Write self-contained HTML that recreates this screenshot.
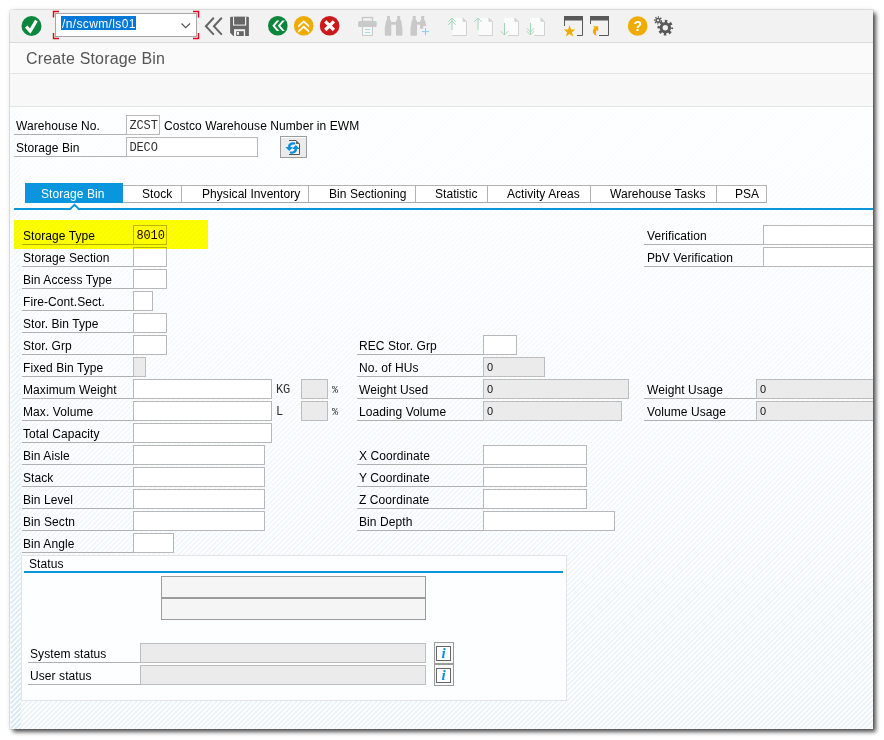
<!DOCTYPE html>
<html lang="en">
<head>
<meta charset="utf-8">
<title>Create Storage Bin</title>
<style>
html,body{margin:0;padding:0;background:#fff;}
body{width:884px;height:740px;position:relative;overflow:hidden;font-family:"Liberation Sans",sans-serif;font-size:12px;color:#000;}
#win{position:absolute;left:10px;top:10px;width:863px;height:719px;overflow:hidden;background:#fff;box-shadow:3px 3px 4px rgba(0,0,0,.66),0 0 0 1px rgba(0,0,0,.07),0 0 5px rgba(0,0,0,.1);border-radius:3px 0 0 0;}
#pg{position:absolute;left:-10px;top:-10px;width:884px;height:740px;}
#pg div{position:absolute;box-sizing:content-box;}
#tb{left:10px;top:10px;width:864px;height:32px;background:#f2f2f2;border-bottom:1px solid #dadada;}
#tt{left:10px;top:43px;width:864px;height:30px;background:#fafafa;border-bottom:1px solid #e2e2e2;}
#tt span{position:absolute;left:16px;top:7px;font-size:16px;color:#555;letter-spacing:.17px;white-space:nowrap;}
#ab{left:10px;top:74px;width:864px;height:32px;background:#f8f8f8;border-bottom:1px solid #e4e4e4;}
#ct{left:10px;top:107px;width:864px;height:623px;background:linear-gradient(to bottom,rgba(255,255,255,.864) 0,rgba(255,255,255,0) 100%),repeating-linear-gradient(135deg,#edf5fa 0,#edf5fa 2.12px,#fff 2.12px,#fff 3.5355px);}
#hd{display:none;}
#ls{left:11px;top:107px;width:10px;height:623px;background:linear-gradient(to bottom,rgba(255,255,255,.864) 0,rgba(255,255,255,0) 100%),repeating-linear-gradient(135deg,#d9ebf6 0,#d9ebf6 2.12px,#fff 2.12px,#fff 3.5355px);}
.lb{height:19px;border-bottom:1px solid #b0b0b0;white-space:nowrap;line-height:19px;letter-spacing:.08px;}
.lb span{position:relative;top:2px;}
.in,.ro{border:1px solid #b8b8b8;background:#fff;font-family:"Liberation Mono",monospace;font-size:12px;letter-spacing:-.15px;color:#303030;line-height:21px;text-indent:2.5px;white-space:nowrap;overflow:hidden;}
.ro{background:#ebebeb;border-color:#bdbdbd;font-family:"Liberation Sans",sans-serif;font-size:11px;letter-spacing:0;color:#111;line-height:19px;text-indent:3px;}
.hl{color:#1a0000;}
.mono{font-family:"Liberation Mono",monospace;font-size:12px;letter-spacing:-.15px;color:#303030;line-height:23px;white-space:nowrap;}
.pc{font-size:10px;}
.tab{top:185px;height:16px;border:1px solid #b2b2b2;border-bottom-color:#a8a8a8;border-left:none;background:#fff;line-height:16px;white-space:nowrap;letter-spacing:.05px;}
.tab span{position:absolute;top:0;}
#yl{left:14px;top:220px;width:194px;height:29px;background:#ffff00;mix-blend-mode:multiply;}
</style>
</head>
<body>
<div id="win"><div id="pg">
<div id="tb"></div>
<div id="tt"><span>Create Storage Bin</span></div>
<div id="ab"></div>
<div id="ct"></div>
<div id="hd"></div>
<div id="ls"></div>

<!-- toolbar icons -->
<svg style="position:absolute;left:10px;top:9px" width="864" height="33" viewBox="10 9 864 33">
 <!-- enter -->
 <circle cx="31.5" cy="26" r="10" fill="#0a873c"/>
 <path d="M26.2 26.6 L30.2 31 L36.4 20.6" fill="none" stroke="#fff" stroke-width="3.2"/>
 <!-- command field -->
 <rect x="55.5" y="13.5" width="141" height="23" fill="#fff" stroke="#a6a6a6"/>
 <path d="M59 11.5H53.500V17.500 M53.500 33V38.500H59 M193 11.5H198.500V17.500 M198.500 33V38.500H193" fill="none" stroke="#e0001a" stroke-width="1.4"/>
 <rect x="61" y="16" width="75" height="14" fill="#0078d7"/>
 <path d="M181.500 23.500L185.700 27.700L190 23.500" fill="none" stroke="#555" stroke-width="1.1"/>
 <!-- back chevrons -->
 <path d="M213.300 18.300L205.900 26.200L213.300 34.100 M221.300 18.300L213.900 26.200L221.300 34.100" fill="none" stroke="#666" stroke-width="2" stroke-linecap="round"/>
 <!-- save -->
 <path d="M231.100 16.800H247.900Q248.900 16.800 248.900 17.800V35.900H233.300L230.100 32.700V17.800Q230.100 16.800 231.100 16.800Z" fill="#666"/>
 <rect x="233" y="16.800" width="13.200" height="8.800" fill="#f2f2f2"/>
 <rect x="234.100" y="16.800" width="10.900" height="7.800" fill="#666"/>
 <rect x="234" y="29.200" width="11.100" height="6.800" fill="#f2f2f2"/>
 <rect x="236.200" y="31.200" width="7.600" height="4.800" fill="#666"/>
 <rect x="237" y="32" width="2" height="2.800" fill="#f2f2f2"/>
 <!-- green back -->
 <circle cx="277.800" cy="25.700" r="9.800" fill="#0a873c"/>
 <path d="M276.800 20.500L272.300 25.700L276.800 31H279.300L274.800 25.700L279.300 20.500Z M282.300 20.500L277.800 25.700L282.300 31H284.800L280.300 25.700L284.800 20.500Z" fill="#fff"/>
 <!-- yellow up -->
 <circle cx="303.700" cy="25.700" r="9.800" fill="#f0ab00"/>
 <path d="M298.200 25.200L303.700 20.300L309.200 25.200V27.500L303.700 22.800L298.200 27.500Z M298.200 30.500L303.700 25.600L309.200 30.500V32.800L303.700 28.100L298.200 32.800Z" fill="#fff"/>
 <!-- red cancel -->
 <circle cx="329.600" cy="25.700" r="9.800" fill="#cc1919"/>
 <path d="M325.300 21.400L333.900 30 M333.900 21.400L325.300 30" stroke="#fff" stroke-width="3.200" fill="none"/>
 <!-- printer (disabled) -->
 <rect x="362.500" y="17.500" width="10" height="4" fill="#f2f2f2" stroke="#c9c9c9" stroke-width="1.400"/>
 <rect x="358" y="20.900" width="18.700" height="6.100" rx="1.500" fill="#c9c9c9"/>
 <path d="M362.500 27V35.500H372.500V27" fill="#f7f7f7" stroke="#c9c9c9" stroke-width="1"/>
 <path d="M365 29.500H370.300 M365 32.500H370.300 M373 22.500H376" stroke="#a8d8f0" stroke-width="1" fill="none"/>
 <!-- binoculars (disabled) -->
 <g fill="#c9c9c9">
  <path d="M387 16H390V19.500L391.300 21V34.700Q391.300 35.700 390.300 35.700H385.800Q384.800 35.700 384.800 34.700V28L386 21L387 19.500Z"/>
  <path d="M400.200 16H397.200V19.500L395.900 21V34.700Q395.900 35.700 396.900 35.700H401.400Q402.400 35.700 402.400 34.700V28L401.200 21L400.200 19.500Z"/>
  <rect x="391" y="22" width="5.200" height="2.700"/>
  <path d="M412.700 16H415.700V19.500L417 21V34.700Q417 35.700 416 35.700H411.500Q410.500 35.700 410.500 34.700V28L411.700 21L412.700 19.500Z"/>
  <path d="M424.200 16H421.200V19.500L420 21V28.700H423.300V26H426.300L425.200 21L424.200 19.500Z"/>
  <rect x="416.800" y="22" width="3.500" height="2.700"/>
 </g>
 <path d="M425.500 28V35.200 M421.900 31.600H429.100" stroke="#8ccbee" stroke-width="1" fill="none"/>
 <!-- page nav (disabled) -->
 <g fill="#fbfbfb" stroke="#d2d2d2" stroke-width="1">
  <path d="M452.500 17.800H462.500L466.500 21.800V35.500H452.500Z" stroke="none"/>
  <path d="M462.500 17.800L466.500 21.800V35.500H452.500" fill="none"/>
  <path d="M462.500 17.800V21.800H466.500Z" fill="#d2d2d2" stroke="none"/>
  <path d="M478.500 17.800H488.500L492.500 21.800V35.500H478.500Z" stroke="none"/>
  <path d="M488.500 17.800L492.500 21.800V35.500H478.500" fill="none"/>
  <path d="M488.500 17.800V21.800H492.500Z" fill="#d2d2d2" stroke="none"/>
  <path d="M504.500 17.800H514.500L518.500 21.800V35.500H504.500Z" stroke="none"/>
  <path d="M514.500 17.800L518.500 21.800V35.500H508" fill="none"/>
  <path d="M514.500 17.800V21.800H518.500Z" fill="#d2d2d2" stroke="none"/>
  <path d="M530.500 17.800H540.500L544.500 21.800V35.500H530.500Z" stroke="none"/>
  <path d="M540.500 17.800L544.500 21.800V35.500H534" fill="none"/>
  <path d="M540.500 17.800V21.800H544.500Z" fill="#d2d2d2" stroke="none"/>
 </g>
 <g fill="none" stroke="#a2d6b8" stroke-width="1">
  <path d="M452 30V18 M448.300 21.800L452 18L455.700 21.800 M448.300 24.800L452 21L455.700 24.800"/>
  <path d="M478 30V18 M474.300 21.800L478 18L481.700 21.800"/>
  <path d="M504.500 23V35 M500.800 31.200L504.500 35L508.200 31.200"/>
  <path d="M530.500 23V35 M526.800 31.200L530.500 35L534.200 31.200 M526.800 28.200L530.500 32L534.200 28.200"/>
 </g>
 <!-- new session -->
 <g fill="none" stroke="#595959">
  <rect x="564" y="16" width="19" height="4.500" fill="#595959" stroke="none"/>
  <path d="M582.500 20V35.500H577 M564.500 20V26"/>
  <rect x="590" y="16" width="19" height="4.500" fill="#595959" stroke="none"/>
  <path d="M608.500 20V35.500H599 M590.500 20V24"/>
 </g>
 <path d="M569.500 25.200L571 29.400L575.400 29.500L571.900 32.200L573.200 36.400L569.500 33.900L565.800 36.400L567.100 32.200L563.600 29.500L568 29.400Z" fill="#f0ab00"/>
 <path d="M593 26.200H598.200V31.600L596.700 30.100C595.600 32 595.600 34 596.400 35.800C593 34.500 591.400 31 594.500 27.800Z" fill="#f0ab00"/>
 <!-- help -->
 <circle cx="637.700" cy="26" r="9.800" fill="#f0ab00"/>
 <text x="637.700" y="31" text-anchor="middle" font-family="Liberation Sans, sans-serif" font-weight="bold" font-size="14" fill="#fff">?</text>
 <!-- gears -->
 <g fill="none" stroke="#595959">
  <circle cx="665.300" cy="27.700" r="4.200" stroke-width="3"/>
  <circle cx="665.300" cy="27.700" r="6.400" stroke-width="2.900" stroke-dasharray="2.500 2.527" stroke-dashoffset="1.250"/>
  <circle cx="658" cy="20.300" r="1.900" stroke-width="1.500"/>
  <circle cx="658" cy="20.300" r="3.300" stroke-width="1.600" stroke-dasharray="1.100 1.492" stroke-dashoffset=".550"/>
 </g>
</svg>
<div style="left:62px;top:16px;height:16px;line-height:16px;color:#fff;font-size:12px;letter-spacing:.37px;white-space:nowrap">/n/scwm/ls01</div>

<!-- header fields -->
<div class="lb" style="left:14px;top:115px;width:112px"><span style="padding-left:2px">Warehouse No.</span></div>
<div class="in" style="left:126px;top:115px;width:32px;height:18px">ZCST</div>
<div style="left:164px;top:115px;height:20px;line-height:23px;white-space:nowrap;letter-spacing:.08px">Costco Warehouse Number in EWM</div>
<div class="lb" style="left:14px;top:137px;width:112px"><span style="padding-left:2px">Storage Bin</span></div>
<div class="in" style="left:126px;top:137px;width:130px;height:18px">DECO</div>
<div style="left:280px;top:136px;width:25px;height:20px;border:1px solid #9c9c9c;background:#ebebeb;box-shadow:inset 0 1px 0 #fff"></div>
<svg style="position:absolute;left:284px;top:139px" width="18" height="17" viewBox="284 139 18 17">
 <path d="M289 140.500H296L299.500 144V154.500H289Z" fill="#f6f6f6"/>
 <path d="M289 140.500H296L299.500 144V154.500H289" fill="none" stroke="#555" stroke-width="1"/>
 <path d="M296 140.500V144H299.500Z" fill="#666"/>
 <path d="M295.300 142.600C290.800 141.400 287.600 144 288.200 147H285.400L289.300 151L293 147H290.500C290.300 145.200 292.400 143.900 295.300 144.600Z" fill="#0a8fe0"/>
 <path d="M289.800 153.400C294.300 154.600 297.500 152 296.900 149H299.700L295.800 145L292.100 149H294.600C294.800 150.800 292.700 152.100 289.800 151.400Z" fill="#0a8fe0"/>
</svg>

<!-- tab strip -->
<div style="left:25px;top:183px;width:98px;height:20px;background:#0a96dc;color:#fff;line-height:20px;white-space:nowrap;letter-spacing:.08px"><span style="position:absolute;left:16px;top:1px">Storage Bin</span></div>
<div class="tab" style="left:123px;width:58px"><span style="left:19px">Stock</span></div>
<div class="tab" style="left:182px;width:126px"><span style="left:20px">Physical Inventory</span></div>
<div class="tab" style="left:309px;width:106px"><span style="left:20px">Bin Sectioning</span></div>
<div class="tab" style="left:416px;width:71px"><span style="left:19px">Statistic</span></div>
<div class="tab" style="left:488px;width:102px"><span style="left:19px">Activity Areas</span></div>
<div class="tab" style="left:591px;width:125px"><span style="left:19px">Warehouse Tasks</span></div>
<div class="tab" style="left:717px;width:49px"><span style="left:18px">PSA</span></div>
<svg style="position:absolute;left:14px;top:203px" width="860" height="9" viewBox="14 203 860 9">
 <path d="M14 209H70.300L74.500 204.800L78.700 209H874" fill="none" stroke="#0a96dc" stroke-width="2"/>
 <path d="M71.700 209L74.500 206.200L77.300 209Z" fill="#fff"/>
</svg>

<div class="lb" style="left:22px;top:225px;width:111px"><span style="padding-left:1px">Storage Type</span></div>
<div class="in hl" style="left:133px;top:225px;width:32px;height:18px">8010</div>
<div class="lb" style="left:22px;top:247px;width:111px"><span style="padding-left:1px">Storage Section</span></div>
<div class="in" style="left:133px;top:247px;width:32px;height:18px"></div>
<div class="lb" style="left:22px;top:269px;width:111px"><span style="padding-left:1px">Bin Access Type</span></div>
<div class="in" style="left:133px;top:269px;width:32px;height:18px"></div>
<div class="lb" style="left:22px;top:291px;width:111px"><span style="padding-left:1px">Fire-Cont.Sect.</span></div>
<div class="in" style="left:133px;top:291px;width:18px;height:18px"></div>
<div class="lb" style="left:22px;top:313px;width:111px"><span style="padding-left:1px">Stor. Bin Type</span></div>
<div class="in" style="left:133px;top:313px;width:32px;height:18px"></div>
<div class="lb" style="left:22px;top:335px;width:111px"><span style="padding-left:1px">Stor. Grp</span></div>
<div class="in" style="left:133px;top:335px;width:32px;height:18px"></div>
<div class="lb" style="left:22px;top:357px;width:111px"><span style="padding-left:1px">Fixed Bin Type</span></div>
<div class="ro" style="left:133px;top:357px;width:11px;height:18px"></div>
<div class="lb" style="left:22px;top:379px;width:111px"><span style="padding-left:1px">Maximum Weight</span></div>
<div class="in" style="left:133px;top:379px;width:137px;height:18px"></div>
<div class="lb" style="left:22px;top:401px;width:111px"><span style="padding-left:1px">Max. Volume</span></div>
<div class="in" style="left:133px;top:401px;width:137px;height:18px"></div>
<div class="lb" style="left:22px;top:423px;width:111px"><span style="padding-left:1px">Total Capacity</span></div>
<div class="in" style="left:133px;top:423px;width:137px;height:18px"></div>
<div class="lb" style="left:22px;top:445px;width:111px"><span style="padding-left:1px">Bin Aisle</span></div>
<div class="in" style="left:133px;top:445px;width:130px;height:18px"></div>
<div class="lb" style="left:22px;top:467px;width:111px"><span style="padding-left:1px">Stack</span></div>
<div class="in" style="left:133px;top:467px;width:130px;height:18px"></div>
<div class="lb" style="left:22px;top:489px;width:111px"><span style="padding-left:1px">Bin Level</span></div>
<div class="in" style="left:133px;top:489px;width:130px;height:18px"></div>
<div class="lb" style="left:22px;top:511px;width:111px"><span style="padding-left:1px">Bin Sectn</span></div>
<div class="in" style="left:133px;top:511px;width:130px;height:18px"></div>
<div class="lb" style="left:22px;top:533px;width:111px"><span style="padding-left:1px">Bin Angle</span></div>
<div class="in" style="left:133px;top:533px;width:39px;height:18px"></div>
<div class="lb" style="left:357px;top:335px;width:126px"><span style="padding-left:2px">REC Stor. Grp</span></div>
<div class="in" style="left:483px;top:335px;width:32px;height:18px"></div>
<div class="lb" style="left:357px;top:357px;width:126px"><span style="padding-left:2px">No. of HUs</span></div>
<div class="ro" style="left:483px;top:357px;width:60px;height:18px">0</div>
<div class="lb" style="left:357px;top:379px;width:126px"><span style="padding-left:2px">Weight Used</span></div>
<div class="ro" style="left:483px;top:379px;width:144px;height:18px">0</div>
<div class="lb" style="left:357px;top:401px;width:126px"><span style="padding-left:2px">Loading Volume</span></div>
<div class="ro" style="left:483px;top:401px;width:137px;height:18px">0</div>
<div class="lb" style="left:357px;top:445px;width:126px"><span style="padding-left:2px">X Coordinate</span></div>
<div class="in" style="left:483px;top:445px;width:102px;height:18px"></div>
<div class="lb" style="left:357px;top:467px;width:126px"><span style="padding-left:2px">Y Coordinate</span></div>
<div class="in" style="left:483px;top:467px;width:102px;height:18px"></div>
<div class="lb" style="left:357px;top:489px;width:126px"><span style="padding-left:2px">Z Coordinate</span></div>
<div class="in" style="left:483px;top:489px;width:102px;height:18px"></div>
<div class="lb" style="left:357px;top:511px;width:126px"><span style="padding-left:2px">Bin Depth</span></div>
<div class="in" style="left:483px;top:511px;width:130px;height:18px"></div>
<div class="lb" style="left:644px;top:225px;width:119px"><span style="padding-left:3px">Verification</span></div>
<div class="in" style="left:763px;top:225px;width:128px;height:18px"></div>
<div class="lb" style="left:644px;top:247px;width:119px"><span style="padding-left:3px">PbV Verification</span></div>
<div class="in" style="left:763px;top:247px;width:128px;height:18px"></div>
<div class="lb" style="left:644px;top:379px;width:112px"><span style="padding-left:3px">Weight Usage</span></div>
<div class="ro" style="left:756px;top:379px;width:128px;height:18px">0</div>
<div class="lb" style="left:644px;top:401px;width:112px"><span style="padding-left:3px">Volume Usage</span></div>
<div class="ro" style="left:756px;top:401px;width:128px;height:18px">0</div>
<div class="mono" style="left:276px;top:379px">KG</div>
<div class="ro" style="left:301px;top:379px;width:25px;height:18px"></div>
<div class="mono pc" style="left:332px;top:379px">%</div>
<div class="mono" style="left:276px;top:401px">L</div>
<div class="ro" style="left:301px;top:401px;width:25px;height:18px"></div>
<div class="mono pc" style="left:332px;top:401px">%</div>
<!-- highlight -->
<div id="yl"></div>

<!-- status group -->
<div style="left:21px;top:555px;width:544px;height:144px;border:1px solid #e3e3e3;background:#fdfeff"></div>
<div style="left:29px;top:556px;height:16px;line-height:16px;white-space:nowrap;letter-spacing:.08px">Status</div>
<div style="left:24px;top:571px;width:539px;height:2px;background:#0a96dc"></div>
<div style="left:161px;top:576px;width:263px;height:20px;border:1px solid #9b9b9b;background:#f5f5f5"></div>
<div style="left:161px;top:598px;width:263px;height:20px;border:1px solid #9b9b9b;background:#f5f5f5"></div>
<div class="lb" style="left:28px;top:643px;width:112px"><span style="padding-left:2px">System status</span></div>
<div class="ro" style="left:140px;top:643px;width:284px;height:18px"></div>
<div class="lb" style="left:28px;top:665px;width:112px"><span style="padding-left:2px">User status</span></div>
<div class="ro" style="left:140px;top:665px;width:284px;height:18px"></div>
<div style="left:434px;top:642px;width:18px;height:20px;border:1px solid #9c9c9c;background:#f8f8f8"></div>
<div style="left:434px;top:664px;width:18px;height:20px;border:1px solid #9c9c9c;background:#f8f8f8"></div>
<div style="left:436px;top:646px;width:13px;height:13px;border:1px solid #666;background:#fff;font-family:'Liberation Serif',serif;font-style:italic;font-weight:bold;font-size:15px;line-height:13px;color:#0a8fe0;text-align:center">i</div>
<div style="left:436px;top:668px;width:13px;height:13px;border:1px solid #666;background:#fff;font-family:'Liberation Serif',serif;font-style:italic;font-weight:bold;font-size:15px;line-height:13px;color:#0a8fe0;text-align:center">i</div>
</div></div>
</body>
</html>
